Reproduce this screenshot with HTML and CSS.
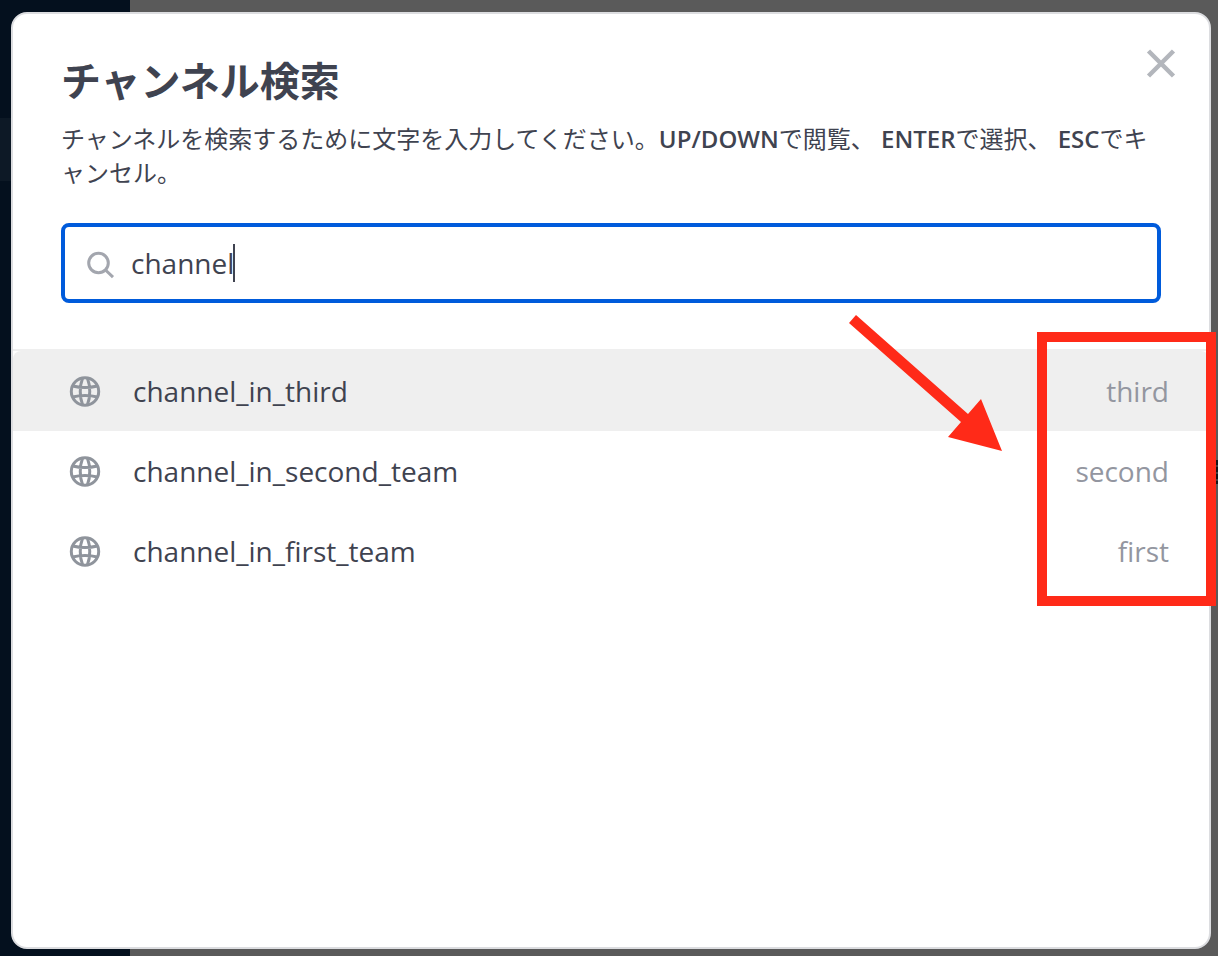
FILE: index.html
```html
<!DOCTYPE html>
<html lang="ja">
<head>
<meta charset="utf-8">
<meta name="viewport" content="width=device-width, initial-scale=1">
<title>チャンネル検索</title>
<link rel="stylesheet" href="styles.css">
</head>
<body class="page">
<svg class="sprite" aria-hidden="true">
  <symbol id="globe" viewBox="0 0 32 32">
    <g fill="none" stroke="currentColor" stroke-width="3">
      <circle cx="16" cy="16.500" r="13.700"/>
      <path d="M13.500 3.500C10.500 11 10.500 22 13.500 29.500M18.500 3.500C21.500 11 21.500 22 18.500 29.500M3.500 11C12 13 20 13 28.500 11M3.500 22C12 20 20 20 28.500 22"/>
    </g>
  </symbol>
</svg>
<span class="sidebar-item"></span>
<span class="page-mark"></span>
<main class="modal" role="dialog" aria-labelledby="title">
  <header class="modal-header">
    <div class="intro">
      <h1 class="title" id="title">チャンネル検索</h1>
      <p class="help">チャンネルを検索するために文字を入力してください。<b>UP/DOWN</b>で閲覧、 <b>ENTER</b>で選択、 <b>ESC</b>でキャンセル。</p>
    </div>
    <button class="close" type="button" aria-label="閉じる">
      <svg width="30" height="30" viewBox="0 0 30 30"><path d="M2.500 3l25 25M27.500 3l-25 25" stroke="currentColor" stroke-width="4.500"/></svg>
    </button>
  </header>
  <div class="search">
    <svg class="search-icon" width="28" height="32" viewBox="0 0 28 32" fill="none" stroke="currentColor"><circle cx="11.500" cy="16" r="9.800" stroke-width="3"/><path d="M18.500 23l7.500 7.200" stroke-width="3"/></svg>
    <input class="search-input" type="text" value="channel" aria-label="チャンネル検索">
    <span class="caret"></span>
  </div>
  <section class="results">
    <ul class="list">
      <li><button class="row row-active" type="button"><svg class="globe"><use href="#globe"/></svg><span class="name">channel_in_third</span><span class="team">third</span></button></li>
      <li><button class="row" type="button"><svg class="globe"><use href="#globe"/></svg><span class="name">channel_in_second_team</span><span class="team">second</span></button></li>
      <li><button class="row" type="button"><svg class="globe"><use href="#globe"/></svg><span class="name">channel_in_first_team</span><span class="team">first</span></button></li>
    </ul>
    <svg class="arrow" width="154" height="138" viewBox="0 0 154 138" aria-hidden="true"><path d="M7 0L119 99L132 84L153 136L99 122L112 107L0 8Z" fill="#ff2a18"/></svg>
    <span class="highlight"></span>
  </section>
</main>
</body>
</html>
```

FILE: styles.css
```css
* {
  box-sizing: border-box;
}

.page {
  position: relative;
  display: flex;
  min-height: 100vh;
  margin: 0;
  padding: 12px 7px 7px 11px;
  overflow: hidden;
  color: #3f4350;
  background: linear-gradient(to right, #04101e 130px, #5a5a5a 130px);
  font-family: "Open Sans", "Noto Sans CJK JP", sans-serif;
}

.sprite {
  position: absolute;
  width: 0;
  height: 0;
}

.sidebar-item {
  position: absolute;
  top: 118px;
  left: 0;
  width: 11px;
  height: 63px;
  background: #0d1926;
}

.page-mark {
  position: absolute;
  top: 460px;
  right: 0;
  width: 2px;
  height: 24px;
  background: repeating-linear-gradient(#151619 0 5px, #414143 5px 7px);
}

.modal {
  position: relative;
  flex: 1;
  min-width: 0;
  border: 2px solid #dcdde0;
  border-radius: 16px;
  background: #fff;
}

.modal-header {
  position: relative;
  padding: 40px 48px 0;
}

.title {
  margin: 0;
  font-size: 40px;
  font-weight: 700;
  line-height: 54px;
}

.help {
  margin: 14px 0 0;
  font-size: 24px;
  line-height: 34px;
  font-weight: 400;
  line-break: loose;
}

.help b {
  font-weight: 600;
}

.close {
  position: absolute;
  top: 34px;
  right: 33px;
  display: flex;
  padding: 0;
  border: 0;
  background: none;
  color: #b3b6bc;
}

.search {
  position: relative;
  display: flex;
  align-items: center;
  gap: 16px;
  height: 80px;
  margin: 33px 48px 46px;
  padding: 0 22px;
  border: 4px solid #005bdb;
  border-radius: 8px;
}

.search-icon {
  flex: none;
  color: #a3a6ae;
}

.search-input {
  flex: 1;
  min-width: 0;
  padding: 0;
  border: 0;
  outline: 0;
  color: inherit;
  background: none;
  font: 28px/40px "Open Sans", sans-serif;
}

.caret {
  position: absolute;
  top: 17px;
  left: 168px;
  width: 2px;
  height: 38px;
  background: #3f4350;
}

.results {
  position: relative;
  border-top: 2px solid #efefef;
}

.list {
  margin: 0;
  padding: 0;
  list-style: none;
}

.row {
  display: flex;
  align-items: center;
  width: 100%;
  height: 80px;
  padding: 0 40px 0 56px;
  border: 0;
  background: none;
  color: inherit;
  font: 28px/40px "Open Sans", sans-serif;
  text-align: left;
}

.row-active {
  border-radius: 8px 8px 0 0;
  background: #efefef;
}

.globe {
  flex: none;
  width: 32px;
  height: 32px;
  margin-right: 32px;
  color: #8f949c;
}

.name {
  flex: 1;
}

.team {
  color: #9396a0;
}

.arrow {
  position: absolute;
  top: -36px;
  right: 206px;
}

.highlight {
  position: absolute;
  top: -19px;
  right: -7px;
  width: 179px;
  height: 274px;
  border: 10px solid #ff2a18;
}
```
